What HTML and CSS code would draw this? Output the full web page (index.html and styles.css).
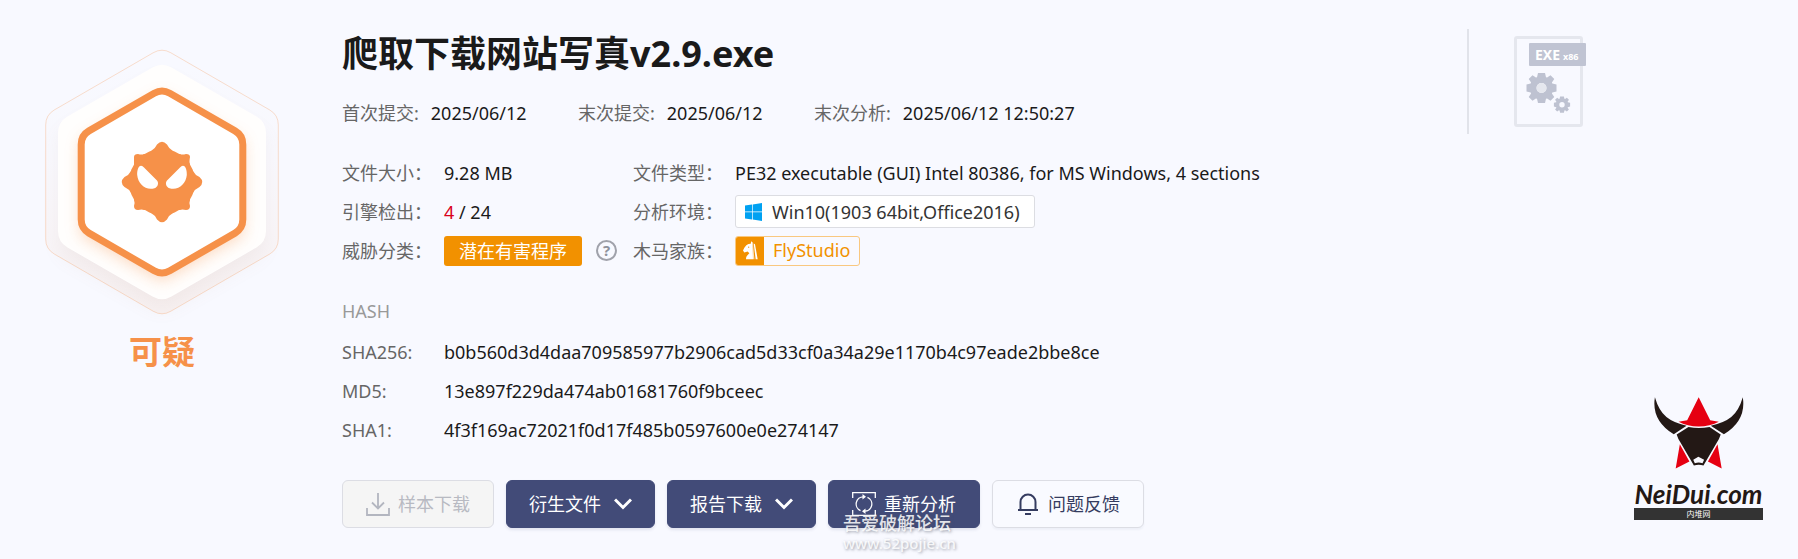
FILE: index.html
```html
<!DOCTYPE html>
<html lang="zh-CN">
<head>
<meta charset="utf-8">
<title>爬取下载网站写真v2.9.exe</title>
<link rel="stylesheet" href="styles.css">
</head>
<body>
<div class="report">
  <section class="verdict">
    <svg class="verdict-badge" viewBox="-150 -150 300 300" aria-hidden="true">
      <defs>
        <linearGradient id="halo" x1="0" y1="0" x2="0" y2="1">
          <stop offset="0" stop-color="#f69149" stop-opacity="0"/>
          <stop offset=".4" stop-color="#f69149" stop-opacity=".01"/>
          <stop offset="1" stop-color="#f69149" stop-opacity=".07"/>
        </linearGradient>
        <filter id="soft" x="-30%" y="-30%" width="160%" height="160%"><feGaussianBlur stdDeviation="10"/></filter>
        <filter id="glow" x="-30%" y="-30%" width="160%" height="160%"><feGaussianBlur stdDeviation="8"/></filter>
        <clipPath id="plate"><use href="#plate-shape"/></clipPath>
      </defs>
      <path d="M0-116L101-58V58L0 116L-101 58V-58Z" transform="translate(0 12)" fill="#a07868" opacity=".09" filter="url(#soft)"/>
      <path d="M-8.7-129.3Q0-134.3 8.7-129.3L107.6-72.1Q116.3-67.1 116.3-57.1V57.1Q116.3 67.1 107.6 72.1L8.7 129.3Q0 134.3-8.7 129.3L-107.6 72.1Q-116.3 67.1-116.3 57.1V-57.1Q-116.3-67.1-107.6-72.1Z" fill="url(#halo)" stroke="#f69149" stroke-opacity=".28"/>
      <path id="plate-shape" d="M-9.5-114.5Q0-120 9.5-114.5L94.5-65.5Q104-60 104-49V49Q104 60 94.5 65.5L9.5 114.5Q0 120-9.5 114.5L-94.5 65.5Q-104 60-104 49V-49Q-104-60-94.5-65.5Z" fill="#fffefd"/>
      <g clip-path="url(#plate)">
        <path d="M0-93L81-47V47L0 93L-81 47V-47Z" transform="translate(0 6)" fill="#f69149" opacity=".36" filter="url(#glow)"/>
      </g>
      <path d="M-7.8-88.8Q0-93.3 7.8-88.8L73-51.1Q80.8-46.6 80.8-37.6V37.6Q80.8 46.6 73 51.1L7.8 88.8Q0 93.3-7.8 88.8L-73 51.1Q-80.8 46.6-80.8 37.6V-37.6Q-80.8-46.6-73-51.1Z" fill="#fff" stroke="#f69149" stroke-width="7"/>
      <g fill="#f69149">
        <circle r="33"/>
        <path d="M-28-19V-25Q-28-28-24-28Q-20-27-18-28H18Q20-27 24-28Q28-28 28-25Q27-20 28-18V18Q27 20 28 24Q28 28 24 28Q20 27 18 28H-18Q-20 27-24 28Q-28 28-28 24Q-27 20-28 18Z"/>
        <path d="M-11-31Q-7-33-5-37.5Q0-43 5-37.5Q7-33 11-31L31-11Q33-7 37.500-5Q43 0 37.500 5Q33 7 31 11L11 31Q7 33 5 37.500Q0 43-5 37.500Q-7 33-11 31L-31 11Q-33 7-37.500 5Q-43 0-37.500-5Q-33-7-31-11Z"/>
      </g>
      <g fill="#fff">
        <path id="eye" d="M-24.800-7C-25-11-24-15-22-16Q-20-17-18-14.500L-5-1.500C-3 1-4 5-7.500 6.200C-16 9-24 2-24.800-7Z"/>
        <use href="#eye" transform="scale(-1 1)"/>
      </g>
    </svg>
    <strong class="verdict-label">可疑</strong>
  </section>

  <main class="details">
    <h1 class="file-name">爬取下载网站写真v2.9.exe</h1>
    <dl class="dates">
      <div class="date"><dt>首次提交:</dt><dd>2025/06/12</dd></div>
      <div class="date"><dt>末次提交:</dt><dd>2025/06/12</dd></div>
      <div class="date"><dt>末次分析:</dt><dd>2025/06/12 12:50:27</dd></div>
    </dl>

    <dl class="facts">
      <dt>文件大小：</dt><dd>9.28 MB</dd>
      <dt>文件类型：</dt><dd>PE32 executable (GUI) Intel 80386, for MS Windows, 4 sections</dd>
      <dt>引擎检出：</dt><dd><span><span class="hits">4</span> / 24</span></dd>
      <dt>分析环境：</dt>
      <dd><span class="env-tag">
        <svg class="win-icon" viewBox="0 0 17 18" aria-hidden="true"><path fill="#00a1f1" d="M0 2.500L7 1.500V8.500H0ZM7.700 1.400L17 0V8.500H7.700ZM0 9.200H7V16.400L0 15.400ZM7.700 9.200H17V18L7.700 16.600Z"/></svg>
        Win10(1903 64bit,Office2016)</span></dd>
      <dt>威胁分类：</dt>
      <dd><span class="threat-tag">潜在有害程序</span>
        <button class="help" type="button" aria-label="帮助">?</button></dd>
      <dt>木马家族：</dt>
      <dd><span class="family-tag"><span class="family-mark">
        <svg class="horse-icon" viewBox="0 0 45 56" aria-hidden="true"><path fill="#fff" d="M25 0L29 4L30 54H9C9 46 13 42 19 36L14 31L4 34L0 28L4 20L10 12Q16 8 23 8Z"/><path fill="#fff" d="M32 7L36 9L44 54H38ZM30 5L34 54H31Z"/><circle cx="17" cy="18" r="1.800" fill="#f29100"/></svg>
        </span><span class="family-name">FlyStudio</span></span></dd>
    </dl>

    <h2 class="hash-title">HASH</h2>
    <dl class="hashes">
      <dt>SHA256:</dt><dd>b0b560d3d4daa709585977b2906cad5d33cf0a34a29e1170b4c97eade2bbe8ce</dd>
      <dt>MD5:</dt><dd>13e897f229da474ab01681760f9bceec</dd>
      <dt>SHA1:</dt><dd>4f3f169ac72021f0d17f485b0597600e0e274147</dd>
    </dl>

    <div class="actions">
      <button class="btn btn-disabled" type="button" disabled>
        <svg class="btn-icon" viewBox="0 0 24 24" fill="none" stroke="#b3b6c0" stroke-width="1.800" aria-hidden="true"><path d="M12 1V16M6 10.500L12 16.500L18 10.500M1 16V23H23V16"/></svg>
        样本下载</button>
      <button class="btn btn-dark btn-menu" type="button">衍生文件
        <svg class="chevron" viewBox="0 0 18 12" fill="none" stroke="#fff" stroke-width="3" aria-hidden="true"><path d="M1 1.500L9 9.500L17 1.500"/></svg></button>
      <button class="btn btn-dark btn-menu" type="button">报告下载
        <svg class="chevron" viewBox="0 0 18 12" fill="none" stroke="#fff" stroke-width="3" aria-hidden="true"><path d="M1 1.500L9 9.500L17 1.500"/></svg></button>
      <div class="reanalyse">
        <button class="btn btn-dark" type="button">
          <svg class="btn-icon" viewBox="0 0 24 24" fill="none" stroke="#fff" stroke-width="1.300" aria-hidden="true"><path d="M.7 6V.7H23.300V6M.7 18V23.300H23.300V18"/><path d="M8.500 18.600A7.200 7.200 0 0 1 11.500 4.800M15.500 5.400A7.200 7.200 0 0 1 12.500 19.200"/><path d="M10.500 2L14 4.800L10.500 7.600ZM13.500 16.400L10 19.200L13.500 22Z" fill="#fff" stroke="none"/></svg>
          重新分析</button>
        <div class="watermark"><span class="watermark-name">吾爱破解论坛</span><span class="watermark-url">www.52pojie.cn</span></div>
      </div>
      <button class="btn btn-light" type="button">
        <svg class="btn-icon" viewBox="0 0 24 24" fill="none" stroke="#353c60" stroke-width="2" aria-hidden="true"><path d="M4.500 18V10A7.500 7.500 0 0 1 19.500 10V18M2 18H22M9 22H15"/></svg>
        问题反馈</button>
    </div>
  </main>

  <aside class="side">
    <div class="file-type">
      <svg class="exe-icon" viewBox="0 0 74 92" role="img" aria-label="EXE x86">
        <rect x="1.500" y="1.500" width="66" height="88" rx="1.500" fill="none" stroke="#e5e7ee" stroke-width="3"/>
        <rect x="15" y="7" width="57" height="23" rx="1" fill="#c0c4d3"/>
        <text class="exe-text" x="21" y="24">EXE</text>
        <text class="arch-text" x="49" y="24">x86</text>
        <g fill="#bec2d1">
          <g transform="translate(27.500 52)">
            <path id="gear" fill-rule="evenodd" d="M-3.500-15H3.500L4.500-10.800L5.600-10.400L9-12.800L12.800-9L10.400-5.600L10.800-4.500L15-3.500V3.500L10.800 4.500L10.400 5.600L12.800 9L9 12.800L5.600 10.400L4.500 10.800L3.500 15H-3.500L-4.500 10.800L-5.600 10.400L-9 12.800L-12.800 9L-10.400 5.600L-10.800 4.500L-15 3.500V-3.500L-10.800-4.500L-10.400-5.600L-12.800-9L-9-12.800L-5.600-10.400L-4.500-10.800ZM-5 0A5 5 0 1 0 5 0A5 5 0 1 0-5 0Z"/>
            <circle r="5" fill="#e5e7ee"/>
          </g>
          <use href="#gear" transform="translate(48 68.700) scale(.54)"/>
        </g>
      </svg>
    </div>
    <div class="site-logo">
      <svg class="bull" viewBox="90 48 288 228" aria-hidden="true">
        <g fill="#e60012">
          <path d="M233 50L269 122L296 127Q268 142 233 142Q198 142 170 127L197 122Z"/>
          <path d="M174 197L204 251L161 273ZM292 197L262 251L305 273Z"/>
        </g>
        <g fill="#231815">
          <path d="M96 50Q108 92 132 112Q154 130 195 139L155 166Q84 122 96 50ZM371 50Q359 92 335 112Q313 130 271 139L312 166Q383 122 371 50Z"/>
          <path d="M201 143Q233 149 267 143L302 167Q298 180 290 192L248 264Q233 258 218 264L176 192Q168 180 164 167Z"/>
        </g>
        <path fill="#f8f9ff" d="M216 246L232 236L250 246L245 257Q233 252 221 257Z"/>
      </svg>
      <span class="logo-name">NeiDui.com</span>
      <span class="logo-strip">内堆网</span>
    </div>
  </aside>
</div>
</body>
</html>
```
FILE: styles.css
```css
* { box-sizing: border-box; }

body {
  margin: 0;
  background: #f8f9ff;
  color: #1a1a1a;
  font: 18px/24px "Noto Sans", "Noto Sans CJK SC", sans-serif;
}

h1, h2, dl, dd { margin: 0; }

.report {
  display: grid;
  grid-template-columns: 342px 1fr 331px;
  min-height: 100vh;
}

/* Verdict */
.verdict {
  display: flex;
  flex-direction: column;
  align-items: center;
  padding: 32px 18px 0 0;
}
.verdict-badge { width: 300px; height: 300px; }
.verdict-label {
  color: #f69149;
  font-size: 33px;
  line-height: 40px;
}

/* Details */
.details { padding: 28px 0 32px; }
.file-name {
  font-size: 36px;
  font-weight: 700;
  line-height: 52px;
}
.dates {
  display: flex;
  gap: 48px;
  margin-top: 21px;
}
.date { display: flex; gap: 12px; min-width: 188px; }
dt { color: #666; }

.facts {
  display: grid;
  grid-template-columns: 102px 189px 102px 1fr;
  grid-auto-rows: 39px;
  align-items: center;
  margin-top: 28px;
}
.facts dd { display: flex; align-items: center; white-space: nowrap; }
.hits { color: #d9001b; }

.env-tag {
  display: flex;
  align-items: center;
  gap: 10px;
  height: 33px;
  padding: 0 14px 0 9px;
  border: 1px solid #dcdde2;
  border-radius: 3px;
  background: #fff;
  color: #333;
}
.win-icon { width: 17px; height: 18px; }

.threat-tag {
  padding: 3px 15px;
  border-radius: 3px;
  background: #f29100;
  color: #fff;
}
.help {
  width: 21px;
  height: 21px;
  margin-left: 14px;
  padding: 0;
  border: 2px solid #a0a2ab;
  border-radius: 50%;
  background: none;
  color: #8f929c;
  font: 700 15px/17px "Noto Sans", sans-serif;
}

.family-tag {
  display: flex;
  height: 30px;
  border: 1px solid #f9c880;
  border-radius: 3px;
  color: #f29100;
  overflow: hidden;
}
.family-mark {
  display: flex;
  align-items: center;
  justify-content: center;
  width: 28px;
  background: #f29100;
}
.horse-icon { width: 15px; height: 19px; }
.family-name { padding: 1px 9px; }

.hash-title {
  margin-top: 29px;
  color: #999;
  font-size: 18px;
  font-weight: 400;
  line-height: 24px;
}
.hashes {
  display: grid;
  grid-template-columns: 102px 1fr;
  grid-auto-rows: 39px;
  align-items: center;
  margin-top: 9px;
}

/* Actions */
.actions {
  display: flex;
  gap: 12px;
  margin-top: 31px;
}
.btn {
  display: flex;
  align-items: center;
  gap: 8px;
  height: 48px;
  padding: 0 23px;
  border: 1px solid #dcdde4;
  border-radius: 6px;
  font: inherit;
  white-space: nowrap;
}
.btn-icon { width: 24px; height: 24px; }
.btn-disabled { background: #f5f5f5; color: #b8bac2; }
.btn-dark {
  border-color: #424b78;
  background: #424b78;
  color: #fff;
  box-shadow: 0 2px 3px rgba(66, 75, 120, .12);
}
.btn-light {
  background: #f9faff;
  color: #353c60;
  box-shadow: 0 2px 2px rgba(66, 75, 120, .05);
}
.btn-menu { gap: 13px; padding: 0 22px; }
.chevron { width: 18px; height: 12px; }

.reanalyse { position: relative; }
.watermark {
  position: absolute;
  top: 33px;
  left: 15px;
  display: flex;
  flex-direction: column;
  color: rgba(255, 255, 255, .85);
  font-weight: 500;
  line-height: 20px;
  text-shadow: 1px 1px 3px rgba(90, 95, 110, .6);
  pointer-events: none;
}
.watermark-url { font-size: 15px; }

/* Side */
.side {
  display: flex;
  flex-direction: column;
  justify-content: space-between;
  padding: 29px 35px 40px 0;
}
.file-type {
  height: 105px;
  padding: 7px 0 0 45px;
  border-left: 2px solid #e1e3ea;
}
.exe-icon { display: block; width: 74px; height: 92px; }
.exe-text {
  fill: #fff;
  font: 700 14px "Noto Sans", sans-serif;
}
.arch-text {
  fill: #fff;
  font: 700 9px "Noto Sans", sans-serif;
}

.site-logo {
  display: flex;
  flex-direction: column;
  align-self: flex-end;
  align-items: center;
  width: 129px;
}
.bull { width: 92px; height: 74px; }
.logo-name {
  margin-top: 10px;
  color: #231815;
  font: italic 700 26px/28px Lato, sans-serif;
}
.logo-strip {
  align-self: stretch;
  background: #333;
  color: #fff;
  font-size: 8px;
  line-height: 12px;
  text-align: center;
}
```
